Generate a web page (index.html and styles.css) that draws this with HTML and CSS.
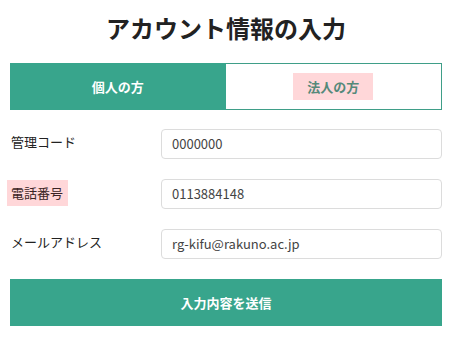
FILE: index.html
```html
<!DOCTYPE html>
<html lang="ja">
<head>
<meta charset="utf-8">
<link rel="stylesheet" href="styles.css">
</head>
<body>
<div class="page">
  <h1 class="title">アカウント情報の入力</h1>
  <div class="tabs">
    <div class="tab tab-active">個人の方</div>
    <div class="tab tab-other"><span class="mark">法人の方</span></div>
  </div>
  <div class="row">
    <div class="label"><span>管理コード</span></div>
    <div class="field">0000000</div>
  </div>
  <div class="row">
    <div class="label"><span class="label-mark">電話番号</span></div>
    <div class="field">0113884148</div>
  </div>
  <div class="row">
    <div class="label"><span>メールアドレス</span></div>
    <div class="field">rg-kifu@rakuno.ac.jp</div>
  </div>
  <div class="submit">入力内容を送信</div>
</div>
</body>
</html>
```
FILE: styles.css
```css
html, body {
  margin: 0;
  padding: 0;
  background: #fff;
}
body {
  font-family: "Noto Sans CJK JP", "Noto Sans", sans-serif;
  color: #222;
}
.page {
  padding: 0 10px;
}
.title {
  margin: 10px 0 17px;
  font-size: 24px;
  line-height: 36px;
  font-weight: 700;
  text-align: center;
  color: #222;
}
.tabs {
  display: flex;
  height: 47px;
  box-sizing: border-box;
  border: 1px solid #3f9e88;
  margin-bottom: 19px;
}
.tab {
  flex: 1;
  display: flex;
  align-items: center;
  justify-content: center;
  font-size: 13px;
  font-weight: 700;
}
.tab-active {
  background: #38a58c;
  color: #fff;
  margin: -1px 0 -1px -1px;
}
.tab-other {
  background: #fff;
  color: #55897a;
}
.mark {
  background: #ffd7d9;
  padding: 0 14px;
  line-height: 27px;
}
.row {
  display: flex;
  align-items: flex-start;
  margin-bottom: 20px;
}
.label {
  width: 151px;
  flex: none;
  font-size: 13px;
  line-height: 26px;
  color: #222;
}
.label span {
  display: inline-block;
  padding-left: 1px;
}
.label .label-mark {
  background: #ffd7d9;
  color: #3a2424;
  padding: 0 5px 0 4px;
  margin-left: -3px;
  margin-top: 1px;
}
.field {
  flex: 1;
  height: 30px;
  box-sizing: border-box;
  border: 1px solid #dcdcdc;
  border-radius: 4px;
  padding: 0 10px;
  font-size: 13px;
  line-height: 28px;
  color: #444;
}
.submit {
  height: 47px;
  background: #38a58c;
  color: #fff;
  font-size: 13px;
  font-weight: 700;
  display: flex;
  align-items: center;
  justify-content: center;
}
```
